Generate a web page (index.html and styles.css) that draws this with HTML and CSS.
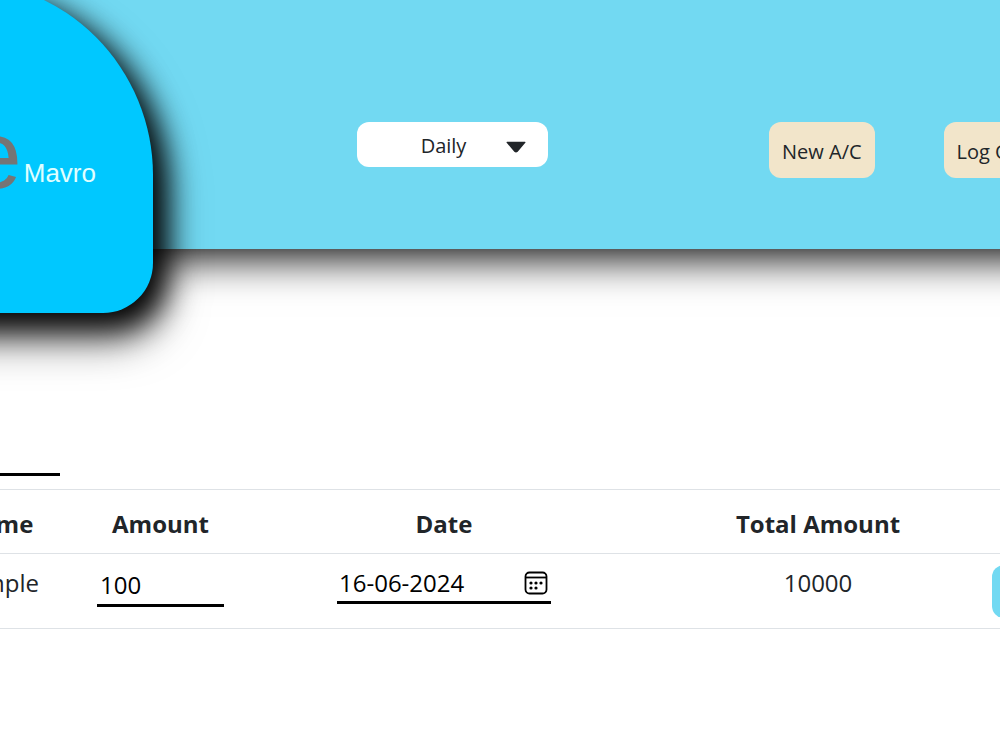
FILE: index.html
```html
<!DOCTYPE html>
<html lang="en">
<head>
    <meta charset="UTF-8">
    <meta name="viewport" content="width=device-width, initial-scale=1.0">
    <title>Mavro</title>
    <link rel="stylesheet" href="styles.css">
</head>
<body>
    <header class="header">
        <div class="logo">
            <span class="logo-big">e</span>
            <span class="logo-small">Mavro</span>
        </div>

        <nav class="nav">
            <div class="period">
                <select class="period-select" aria-label="Period">
                    <option>Daily</option>
                    <option>Weekly</option>
                    <option>Monthly</option>
                </select>
                <svg class="period-arrow" viewBox="0 0 20 12" aria-hidden="true">
                    <path d="M1 .8h18q1 0 .3 1l-7.600 9q-1.700 1.500-3.400 0L.7 1.800q-.7-1 .3-1z" fill="#212529"/>
                </svg>
            </div>
            <div class="account">
                <button class="account-btn" type="button">New A/C</button>
                <button class="account-btn" type="button">Log Out</button>
            </div>
        </nav>
    </header>

    <main class="content">
        <input class="line-input search" type="text" aria-label="Search">

        <table class="table">
            <colgroup>
                <col class="col-name">
                <col class="col-amount">
                <col class="col-date">
                <col class="col-total">
                <col>
            </colgroup>
            <thead>
                <tr>
                    <th>Name</th>
                    <th>Amount</th>
                    <th>Date</th>
                    <th>Total Amount</th>
                    <th></th>
                </tr>
            </thead>
            <tbody>
                <tr>
                    <td>Sample</td>
                    <td><input class="line-input amount" type="text" value="100" aria-label="Amount"></td>
                    <td>
                        <div class="date">
                            <input class="date-input" type="text" value="16-06-2024" aria-label="Date">
                            <button class="date-btn" type="button" aria-label="Open calendar">
                                <svg class="date-icon" viewBox="0 0 24 24" aria-hidden="true">
                                    <rect x="1.500" y="1.500" width="21" height="21" rx="4" fill="none" stroke="#000" stroke-width="1.800"/>
                                    <path d="M1.500 6.500h21" stroke="#000" stroke-width="1.800"/>
                                    <circle cx="7" cy="12" r="1.600"/>
                                    <circle cx="12" cy="12" r="1.600"/>
                                    <circle cx="17" cy="12" r="1.600"/>
                                    <circle cx="7" cy="17" r="1.600"/>
                                    <circle cx="12" cy="17" r="1.600"/>
                                </svg>
                            </button>
                        </div>
                    </td>
                    <td>10000</td>
                    <td class="action"><button class="action-btn" type="button" aria-label="Save"></button></td>
                </tr>
            </tbody>
        </table>
    </main>
</body>
</html>
```
FILE: styles.css
```css
* {
    margin: 0;
    padding: 0;
    box-sizing: border-box;
}

body {
    background-color: white;
    color: #212529;
    font-family: "Segoe UI", "Open Sans", sans-serif;
    font-size: 24px;
    line-height: 36px;
    overflow-x: hidden;
}

button,
input,
select {
    font: inherit;
    color: inherit;
    border: none;
}

.header {
    display: flex;
    align-items: flex-start;
    height: 249px;
    margin-right: -200px;
    background-color: #72d9f2;
    box-shadow: 0 8px 40px black;
}

.logo {
    display: flex;
    flex-shrink: 0;
    align-items: flex-end;
    justify-content: flex-end;
    gap: 2px;
    width: 353px;
    height: 333px;
    margin-top: -20px;
    margin-left: -200px;
    padding-right: 57px;
    padding-bottom: 110px;
    background-color: #00c8ff;
    border-radius: 0 195px 50px 0;
    box-shadow: 12px 14px 30px black, 10px 26px 44px rgba(0, 0, 0, 0.6);
    font-family: "Liberation Sans", Arial, sans-serif;
}

.logo-big {
    color: #757575;
    font-size: 96px;
    line-height: 96px;
}

.logo-small {
    color: #e0ffff;
    font-size: 26px;
    line-height: 60px;
}

.nav {
    display: flex;
    flex: 1;
    align-items: flex-start;
    gap: 221px;
    padding-top: 122px;
    padding-left: 204px;
    font-size: 20px;
    line-height: 30px;
}

.period {
    position: relative;
    flex-shrink: 0;
    width: 191px;
}

.period-select {
    display: block;
    width: 100%;
    height: 45px;
    padding: 2px 38px 0 20px;
    background-color: white;
    border-radius: 12px;
    text-align: center;
    text-align-last: center;
    appearance: none;
}

.period-arrow {
    position: absolute;
    top: 19px;
    right: 22px;
    width: 20px;
    height: 12px;
    pointer-events: none;
}

.account {
    display: flex;
    gap: 69px;
}

.account-btn {
    height: 56px;
    padding: 3px 13px 0;
    background-color: #f2e5ca;
    border-radius: 12px;
    white-space: nowrap;
    cursor: pointer;
}

.content {
    margin: 180px -200px 0 -94px;
}

.line-input {
    display: block;
    background-color: transparent;
    border-bottom: 3px solid black;
    color: black;
    outline: none;
}

.search {
    width: 154px;
    height: 47px;
    margin-bottom: 13px;
}

.table {
    width: 100%;
    border-collapse: collapse;
    border-top: 1px solid #dee2e6;
    table-layout: fixed;
    text-align: center;
}

.col-name {
    width: 183px;
}

.col-amount {
    width: 143px;
}

.col-date {
    width: 424px;
}

.col-total {
    width: 324px;
}

.table th,
.table td {
    padding: 11px 8px;
    border-bottom: 1px solid #dee2e6;
    vertical-align: top;
}

.table th {
    padding-top: 16px;
}

.table td {
    padding-bottom: 10px;
}

.amount {
    width: 100%;
    height: 42px;
    padding: 0 3px;
}

.date {
    display: flex;
    align-items: center;
    width: 214px;
    margin: 0 auto;
    border-bottom: 3px solid black;
}

.date-input {
    flex: 1;
    min-width: 0;
    padding-left: 2px;
    background-color: transparent;
    color: black;
    outline: none;
}

.date-btn {
    display: flex;
    padding: 0 3px;
    background-color: transparent;
    cursor: pointer;
}

.date-icon {
    width: 24px;
    height: 24px;
}

.table .action {
    padding-left: 12px;
    text-align: left;
}

.action-btn {
    display: block;
    width: 110px;
    height: 53px;
    background-color: #72d9f2;
    border-radius: 12px;
    cursor: pointer;
}
```
